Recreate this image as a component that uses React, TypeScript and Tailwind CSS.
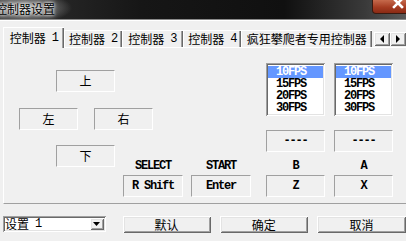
import React from "react";

const mono = "[font-family:'Liberation_Mono',monospace] tracking-[-1.2px] font-bold";

function KeyBox({ children, className = "" }: { children: React.ReactNode; className?: string }) {
  return (
    <div
      className={`h-[22px] flex items-center justify-center border border-t-[#a0a0a0] border-l-[#a0a0a0] border-r-white border-b-white ${className}`}
    >
      {children}
    </div>
  );
}

function ListBox() {
  const items = ["10FPS", "15FPS", "20FPS", "30FPS"];
  return (
    <div className="w-[59px] h-[53px] bg-white overflow-hidden shadow-[inset_1px_1px_#a0a0a0,inset_-1px_-1px_#ffffff,inset_2px_2px_#696969,inset_-2px_-2px_#e3e3e3] p-[2px] pt-[3px]">
      {items.map((t, i) => (
        <div
          key={t}
          className={`h-[12px] leading-[12px] pl-[8px] ${mono} ${i === 0 ? "bg-[#6497ff] text-white" : "text-black"}`}
        >
          {t}
        </div>
      ))}
    </div>
  );
}

function Tab({ w, label, num, selected }: { w: string; label: string; num: string; selected?: boolean }) {
  return (
    <div
      className={`${w} flex items-center justify-center ${
        selected
          ? "h-[21px] bg-[#f0f0f0] shadow-[inset_1px_1px_#ffffff,inset_-1px_0_#696969,inset_-2px_0_#a0a0a0]"
          : "h-[17px] mb-[1px] shadow-[inset_1px_1px_#ffffff,inset_-1px_0_#696969,inset_-2px_0_#a0a0a0]"
      }`}
    >
      <span>{label}</span>
      {num && <span className={`${mono} font-normal ml-[6px]`}>{num}</span>}
    </div>
  );
}

const raised =
  "shadow-[inset_1px_1px_#ffffff,inset_-1px_-1px_#696969,inset_2px_2px_#e3e3e3,inset_-2px_-2px_#a0a0a0]";

function Arrow({ dir }: { dir: "left" | "right" }) {
  return (
    <div className={`w-[16px] h-[14px] bg-[#f0f0f0] flex items-center justify-center ${raised}`}>
      <svg width="6" height="8" viewBox="0 0 6 8">
        {dir === "left" ? <polygon points="5,0 5,8 1,4" fill="#000" /> : <polygon points="1,0 1,8 5,4" fill="#000" />}
      </svg>
    </div>
  );
}

function Label({ children }: { children: React.ReactNode }) {
  return <div className={`h-[12px] leading-[12px] text-center ${mono}`}>{children}</div>;
}

export default function App() {
  return (
    <div className="w-[406px] h-[241px] overflow-hidden bg-[#f0f0f0] [font-family:'Noto_Sans_CJK_SC',sans-serif] text-[12px] leading-[12px] text-black">
      {/* title bar */}
      <div className="h-[19px] flex items-start bg-[radial-gradient(ellipse_48px_16px_at_24px_8px,rgba(185,185,185,0.95),rgba(185,185,185,0)),linear-gradient(to_right,#303030,#161616_35%,#101010_70%,#3a3a3a_90%,#5a5a5a)]">
        <div className="ml-[-5px] mt-[2px] text-[12px] leading-[13px] text-black [text-shadow:0_0_5px_#ffffff,0_0_3px_#ffffff]">
          控制器设置
        </div>
        <div className="ml-auto -mr-[11px] w-[45px] h-[14px] rounded-bl-[4px] border border-t-0 border-[#3a1a10] bg-[linear-gradient(#c66a4c,#a63c22_55%,#8a2a14)] overflow-hidden">
          <svg width="45" height="14" viewBox="0 0 45 14">
            <path d="M21 -1 L29 7 M29 -1 L21 7" stroke="#ffffff" strokeWidth="2.6" strokeLinecap="square" />
          </svg>
        </div>
      </div>
      <div className="h-[1px] bg-[#8a8a8a]" />
      <div className="h-[1px] bg-white" />

      {/* tabs */}
      <div className="relative z-10 flex items-end h-[21px] mt-[6px] ml-[3px]">
        <Tab w="w-[62px]" label="控制器" num="1" selected />
        <Tab w="w-[58px]" label="控制器" num="2" />
        <Tab w="w-[62px]" label="控制器" num="3" />
        <Tab w="w-[59px]" label="控制器" num="4" />
        <Tab w="w-[132px]" label="疯狂攀爬者专用控制器" num="" />
        <div className="flex ml-[2px] mb-[2px]">
          <Arrow dir="left" />
          <Arrow dir="right" />
        </div>
      </div>

      {/* panel */}
      <div className="-mt-[1px] ml-[3px] w-[420px] h-[157px] border-l border-t border-b border-l-white border-t-white border-b-[#a0a0a0]">
        {/* upper row */}
        <div className="flex items-start mt-[15px]">
          <div className="ml-[15px] flex flex-col w-[134px]">
            <KeyBox className="ml-[37px] mt-[7px] w-[59px]">上</KeyBox>
            <div className="flex gap-[16px] mt-[16px]">
              <KeyBox className="w-[59px]">左</KeyBox>
              <KeyBox className="w-[59px]">右</KeyBox>
            </div>
          </div>
          <div className="ml-[113px]">
            <ListBox />
          </div>
          <div className="ml-[9px]">
            <ListBox />
          </div>
        </div>

        {/* lower row */}
        <div className="flex items-start">
          <KeyBox className="ml-[52px] mt-[15px] w-[59px]">下</KeyBox>
          <div className="ml-[8px] w-[60px] pt-[30px]">
            <Label>SELECT</Label>
            <KeyBox className="mt-[3px]">
              <span className={mono}>R Shift</span>
            </KeyBox>
          </div>
          <div className="ml-[8px] w-[60px] pt-[30px]">
            <Label>START</Label>
            <KeyBox className="mt-[3px]">
              <span className={mono}>Enter</span>
            </KeyBox>
          </div>
          <div className="ml-[15px] w-[59px]">
            <KeyBox>
              <span className={mono}>----</span>
            </KeyBox>
            <div className="h-[23px] pt-[8px]">
              <Label>B</Label>
            </div>
            <KeyBox>
              <span className={mono}>Z</span>
            </KeyBox>
          </div>
          <div className="ml-[9px] w-[59px]">
            <KeyBox>
              <span className={mono}>----</span>
            </KeyBox>
            <div className="h-[23px] pt-[8px]">
              <Label>A</Label>
            </div>
            <KeyBox>
              <span className={mono}>X</span>
            </KeyBox>
          </div>
        </div>
      </div>

      {/* bottom row */}
      <div className="flex items-start mt-[12px] pl-[3px]">
        <div className="w-[103px] h-[16px] bg-white flex items-center p-[2px] shadow-[inset_1px_1px_#a0a0a0,inset_-1px_-1px_#ffffff,inset_2px_2px_#696969,inset_-2px_-2px_#e3e3e3]">
          <span className="ml-[0px]">设置</span>
          <span className={`${mono} font-normal ml-[6px]`}>1</span>
          <div className={`ml-auto w-[14px] h-[12px] bg-[#f0f0f0] flex items-center justify-center ${raised}`}>
            <svg width="7" height="4" viewBox="0 0 7 4">
              <polygon points="0,0 7,0 3.5,4" fill="#000" />
            </svg>
          </div>
        </div>
        <div className={`ml-[17px] w-[88px] h-[17px] flex items-center justify-center ${raised}`}>默认</div>
        <div className={`ml-[9px] w-[89px] h-[17px] flex items-center justify-center ${raised}`}>确定</div>
        <div className={`ml-[9px] w-[89px] h-[17px] flex items-center justify-center ${raised}`}>取消</div>
      </div>
    </div>
  );
}
